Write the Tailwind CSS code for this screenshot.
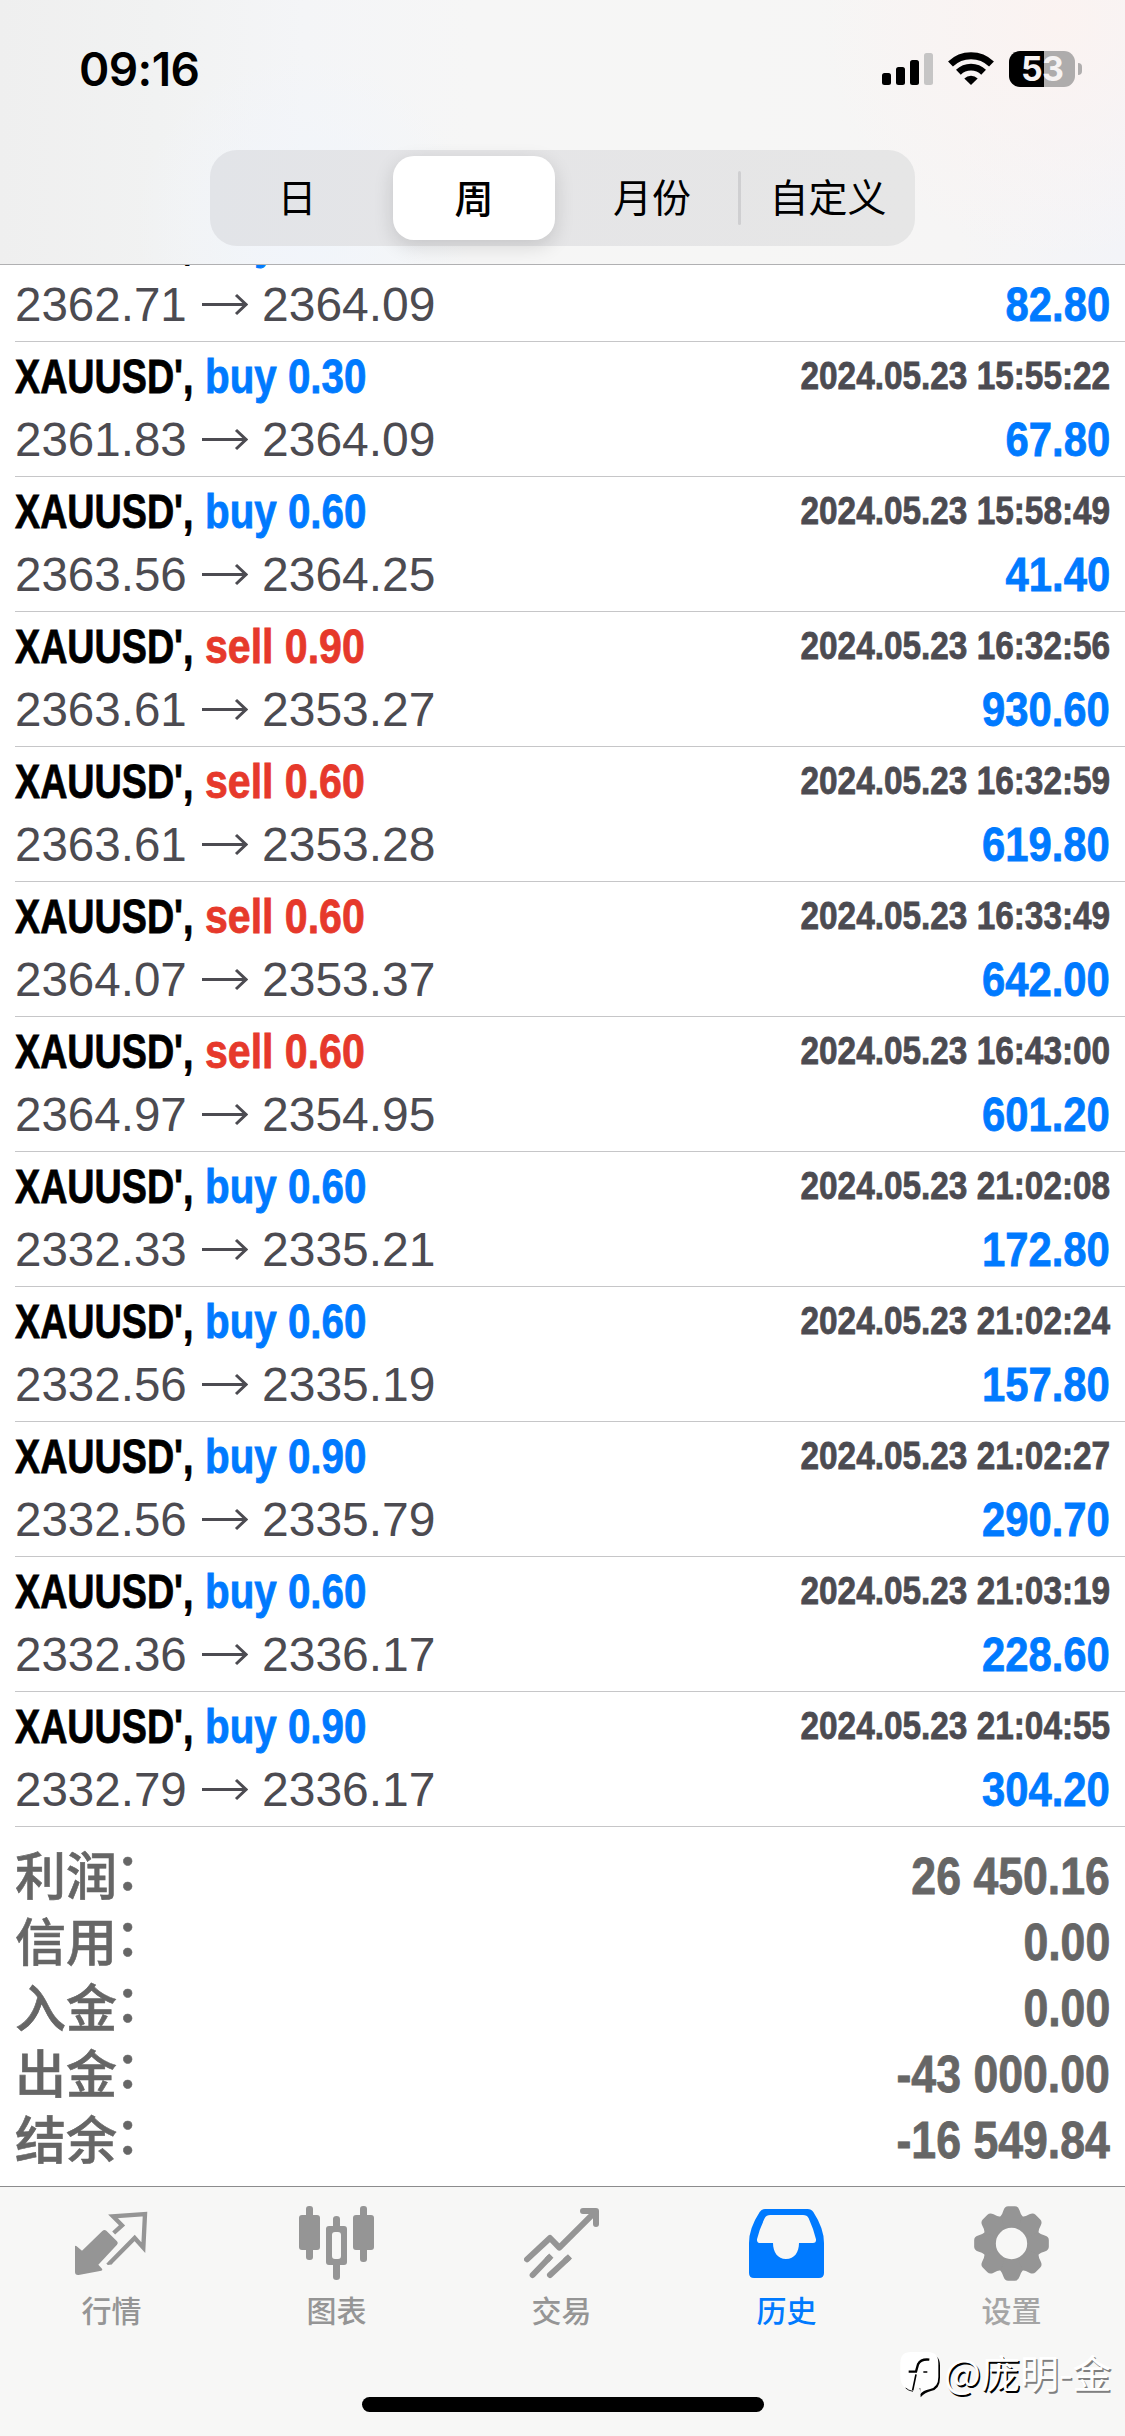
<!DOCTYPE html>
<html lang="zh-CN">
<head>
<meta charset="utf-8">
<title>历史</title>
<script src="https://cdn.jsdelivr.net/npm/@tailwindcss/browser@4"></script>
</head>
<body class="bg-white">
<div class="flex flex-col w-[1125px] h-[2436px] overflow-hidden bg-white font-['Liberation_Sans','Noto_Sans_CJK_SC',sans-serif]">

  <header class="h-[265px] shrink-0 flex flex-col border-b border-[#b0b0b2] bg-[radial-gradient(circle_at_94%_8%,#fbf3f1_0%,rgba(251,243,241,0)_22%),radial-gradient(circle_at_27%_85%,#f1f5fb_0%,rgba(241,245,251,0)_20%),linear-gradient(90deg,#efefef_0%,#f1f2f2_14%,#f4f5f7_27%,#f6f6f6_42%,#f6f6f5_65%,#f6f5f5_85%,#f3f4f8_100%)]">
    <div class="h-[150px] shrink-0 flex justify-between pl-[79px] pr-[43px] pt-[51px]">
      <div class="font-['Inter',sans-serif] font-semibold text-[46px] tracking-[-0.6px] leading-[36px] whitespace-nowrap text-black">09:16</div>
      <div class="flex h-[36px]">
        <svg class="w-[51px] h-[36px]" viewBox="882 51 51 36">
          <rect x="882" y="73" width="9" height="12" rx="2.5"/>
          <rect x="896" y="67" width="9" height="18" rx="2.5"/>
          <rect x="910" y="60" width="9" height="25" rx="2.5"/>
          <rect x="924" y="53" width="9" height="32" rx="2.5" fill="#c6c5c5"/>
        </svg>
        <svg class="ml-[15px] w-[46px] h-[36px]" viewBox="948 51 46 36">
          <path d="M971 85 L964.300 78.500 A9.600 9.600 0 0 1 977.700 78.500 Z"/>
          <path d="M958.400 72.200 A18 18 0 0 1 983.600 72.200" fill="none" stroke="#000" stroke-width="6.8"/>
          <path d="M950.500 64 A29.500 29.500 0 0 1 991.500 64" fill="none" stroke="#000" stroke-width="7"/>
        </svg>
        <div class="ml-[15px] w-[66px] h-[36px] rounded-[11px] bg-[linear-gradient(90deg,#000_53%,#aeacac_53%)] flex items-center justify-center font-['Inter',sans-serif] font-bold text-[34px] tracking-[-0.8px] leading-none text-[#f6f3f3]">53</div>
        <div class="ml-[3px] mt-[12px] w-[4px] h-[12px] rounded-r-full bg-[#b0aeae]"></div>
      </div>
    </div>
    <div class="ml-[210px] w-[705px] h-[96px] rounded-[27px] bg-[linear-gradient(90deg,#e2e4e8,#e5e5e7_35%,#e6e6e6)] flex items-center py-[6px] text-[39px] text-black">
      <div class="w-[174px] text-center leading-[87px]">日</div>
      <div class="ml-[9px] w-[162px] h-[84px] rounded-[21px] bg-white shadow-[0_6px_20px_rgba(0,0,0,0.14)] text-center leading-[87px] font-medium">周</div>
      <div class="ml-[11px] w-[172px] text-center leading-[87px]">月份</div>
      <div class="w-[3px] h-[54px] rounded-full bg-[#cfcfd1]"></div>
      <div class="w-[174px] text-center leading-[87px]">自定义</div>
    </div>
  </header>

  <main class="h-[1921px] shrink-0 overflow-hidden">
    <div id="deals" class="-mt-[58px] flex flex-col"></div>
    <div id="totals" class="mt-[15px] flex flex-col pl-[15px] pr-[15px] text-[#666666]"></div>
  </main>

  <footer class="relative h-[250px] shrink-0 border-t border-[#8c8c8d] bg-[#f7f7f6] text-[#959595]">
    <nav class="-ml-px pt-[19px] grid grid-cols-5 w-[1125px] text-[30px] font-medium">
      <div class="flex flex-col items-center">
        <svg class="size-[75px]" viewBox="222 78 225 225" fill="#959595">
          <path d="M225 199 Q226 196 230 199 L246 212 L307 153 Q313 147 319 152 L351 184 Q356 189 351 194 L295 254 L306 266 Q309 270 304 272 L236 285 Q225 286 225 276 Z"/>
          <path d="M341 159 L366 136 L339 109 L435 102 L430 203 L404 174 L329 250" fill="none" stroke="#959595" stroke-width="13"/>
          <path d="M319 250 L333 240 L339 248 Q333 256 323 255 Z"/>
        </svg>
        <span class="mt-[13px] leading-[36px]">行情</span>
      </div>
      <div class="flex flex-col items-center">
        <svg class="size-[75px]" viewBox="897 78 225 225" fill="#959595">
          <rect x="918" y="78" width="21" height="162" rx="9"/><rect x="897" y="105" width="63" height="105" rx="9"/>
          <rect x="1080" y="78" width="21" height="168" rx="9"/><rect x="1059" y="105" width="63" height="105" rx="9"/>
          <path d="M999 138 V117 Q999 108 1009.500 108 Q1020 108 1020 117 V138 H1032 Q1041 138 1041 147 V246 Q1041 255 1032 255 H1020 V291 Q1020 300 1009.500 300 Q999 300 999 291 V255 H987 Q978 255 978 246 V147 Q978 138 987 138 Z M1005 156 Q996 156 996 165 V228 Q996 237 1005 237 H1014 Q1023 237 1023 228 V165 Q1023 156 1014 156 Z" fill-rule="evenodd"/>
        </svg>
        <span class="mt-[13px] leading-[36px]">图表</span>
      </div>
      <div class="flex flex-col items-center">
        <svg class="size-[75px]" viewBox="372 78 225 225" fill="none" stroke="#959595" stroke-width="18" stroke-linecap="round" stroke-linejoin="round">
          <path d="M381 238 L450 174 L478 203 L584 97"/>
          <path d="M549 93 H588 V132"/>
          <path d="M398 285 L447 234 M450 285 L503 236"/>
          <path d="M440 241 L454 227 M496 242 L510 229" stroke-linecap="butt"/>
        </svg>
        <span class="mt-[13px] leading-[36px]">交易</span>
      </div>
      <div class="flex flex-col items-center text-[#007aff]">
        <svg class="size-[75px]" viewBox="147 78 225 225" fill="#007aff">
          <path fill-rule="evenodd" d="M195 87 H323 Q334 87 340 96 Q372 145 372 189 V279 Q372 294 357 294 H162 Q147 294 147 279 V189 Q147 145 179 96 Q185 87 195 87 Z M211 105 Q199 105 194 115 Q178 148 171 178 Q170 189 181 189 H219 C219 216 233 237 258 237 C284 237 297 216 297 189 H339 Q349 189 348 178 Q341 148 326 115 Q321 105 309 105 Z"/>
        </svg>
        <span class="mt-[13px] leading-[36px]">历史</span>
      </div>
      <div class="flex flex-col items-center">
        <svg class="size-[75px]" viewBox="-112.500 -112.500 225 225">
          <defs><path id="tooth" d="M-34 -80 Q-27 -88 -24 -100 Q-20 -112 -10 -112 H10 Q20 -112 24 -100 Q27 -88 34 -80 L20 -50 H-20 Z"/></defs>
          <g fill="#959595">
            <path fill-rule="evenodd" d="M-87 0 A87 87 0 1 1 87 0 A87 87 0 1 1 -87 0 Z M-47 0 A47 47 0 1 0 47 0 A47 47 0 1 0 -47 0 Z"/>
            <use href="#tooth"/><use href="#tooth" transform="rotate(45)"/><use href="#tooth" transform="rotate(90)"/><use href="#tooth" transform="rotate(135)"/><use href="#tooth" transform="rotate(180)"/><use href="#tooth" transform="rotate(225)"/><use href="#tooth" transform="rotate(270)"/><use href="#tooth" transform="rotate(315)"/>
          </g>
        </svg>
        <span class="mt-[13px] leading-[36px] text-[#a5a5a5]">设置</span>
      </div>
    </nav>
    <div class="absolute left-[362px] top-[210px] w-[402px] h-[15px] rounded-full bg-black"></div>
    <div class="absolute left-[899px] top-[163px] flex items-start">
      <svg class="w-[42px] h-[49px]" viewBox="40 35 126 147">
        <path d="M80 47 H130 Q163 49 163 82 V118 Q163 152 136 158 Q118 162 105 177 L104 160 Z" fill="#000"/>
        <path d="M76 41 H126 Q158 41 158 74 V116 Q158 148 131 153 Q113 156 103 168 L104 150 L86 145 L78 158 Q44 150 44 114 V74 Q44 41 76 41 Z" fill="#fff"/>
        <path d="M131 64 Q106 61 97 78 L91 100 H69" fill="none" stroke="#000" stroke-width="7"/>
        <path d="M91 108 L81 156 M113 101 H125" fill="none" stroke="#000" stroke-width="5"/>
        <path d="M60 149 Q68 157 82 159" fill="none" stroke="#222" stroke-width="3"/>
      </svg>
      <span class="ml-[3px] -mt-[2px] text-[39px] leading-[46px] text-white whitespace-nowrap font-['Noto_Sans_CJK_SC',sans-serif]"><span class="[text-shadow:1.5px_1.5px_0_#000]">@庞</span><span class="[text-shadow:1.5px_1.5px_0_#808080]">明-金</span></span>
    </div>
  </footer>
</div>

<script>
  const deals = [
    ['buy', '0.60', '', '2362.71', '2364.09', '82.80'],
    ['buy', '0.30', '2024.05.23 15:55:22', '2361.83', '2364.09', '67.80'],
    ['buy', '0.60', '2024.05.23 15:58:49', '2363.56', '2364.25', '41.40'],
    ['sell', '0.90', '2024.05.23 16:32:56', '2363.61', '2353.27', '930.60'],
    ['sell', '0.60', '2024.05.23 16:32:59', '2363.61', '2353.28', '619.80'],
    ['sell', '0.60', '2024.05.23 16:33:49', '2364.07', '2353.37', '642.00'],
    ['sell', '0.60', '2024.05.23 16:43:00', '2364.97', '2354.95', '601.20'],
    ['buy', '0.60', '2024.05.23 21:02:08', '2332.33', '2335.21', '172.80'],
    ['buy', '0.60', '2024.05.23 21:02:24', '2332.56', '2335.19', '157.80'],
    ['buy', '0.90', '2024.05.23 21:02:27', '2332.56', '2335.79', '290.70'],
    ['buy', '0.60', '2024.05.23 21:03:19', '2332.36', '2336.17', '228.60'],
    ['buy', '0.90', '2024.05.23 21:04:55', '2332.79', '2336.17', '304.20'],
  ];
  document.getElementById('deals').innerHTML = deals.map(([side, lots, time, open, close, profit]) => `
    <div class="h-[135px] ml-[15px] pt-[3px] border-b border-[#c6c6c8] text-[48px] leading-[63px] whitespace-nowrap">
      <div class="flex h-[63px] font-bold [-webkit-text-stroke:0.8px_currentColor]">
        <div class="w-[190px] text-black"><span class="inline-block origin-left scale-x-[0.785]">XAUUSD',</span></div>
        <div class="${side === 'buy' ? 'text-[#007aff]' : 'text-[#e6392b]'}"><span class="inline-block origin-left ${side === 'buy' ? 'scale-x-[0.84]' : 'scale-x-[0.855]'}">${side} ${lots}</span></div>
        <div class="ml-auto mr-[15px] w-[320px] flex justify-end text-[39px] leading-[61px] text-[#4c4b51]"><span class="inline-block origin-right scale-x-[0.855]">${time}</span></div>
      </div>
      <div class="flex h-[63px] text-[#4c4b51]">
        <div class="w-[187px]"><span class="inline-block origin-left scale-x-[0.99]">${open}</span></div>
        <svg class="w-[46px] h-[63px]" viewBox="0 0 46 63" fill="none" stroke="#4c4b51" stroke-width="3"><path d="M0 31.500 H44 M34 22 L44 31.500 L34 41"/></svg>
        <div class="ml-[14px]"><span class="inline-block origin-left">${close}</span></div>
        <div class="ml-auto mr-[15px] font-bold text-[#007aff] [-webkit-text-stroke:0.8px_currentColor]"><span class="inline-block origin-right scale-x-[0.87]">${profit}</span></div>
      </div>
    </div>`).join('');

  const totals = [
    ['利润', '26 450.16'], ['信用', '0.00'], ['入金', '0.00'], ['出金', '-43 000.00'], ['结余', '-16 549.84'],
  ];
  document.getElementById('totals').innerHTML = totals.map(([label, value]) => `
    <div class="flex justify-between h-[66px] whitespace-nowrap text-[51px]">
      <span class="font-medium leading-[62px] font-['Noto_Sans_CJK_SC',sans-serif] [-webkit-text-stroke:0.6px_currentColor]">${label}<span class="inline-block -translate-x-[2px] -translate-y-[5px]">：</span></span>
      <span class="inline-block origin-right scale-x-[0.875] leading-[70px] font-bold [-webkit-text-stroke:0.8px_currentColor]">${value}</span>
    </div>`).join('');
</script>
</body>
</html>
